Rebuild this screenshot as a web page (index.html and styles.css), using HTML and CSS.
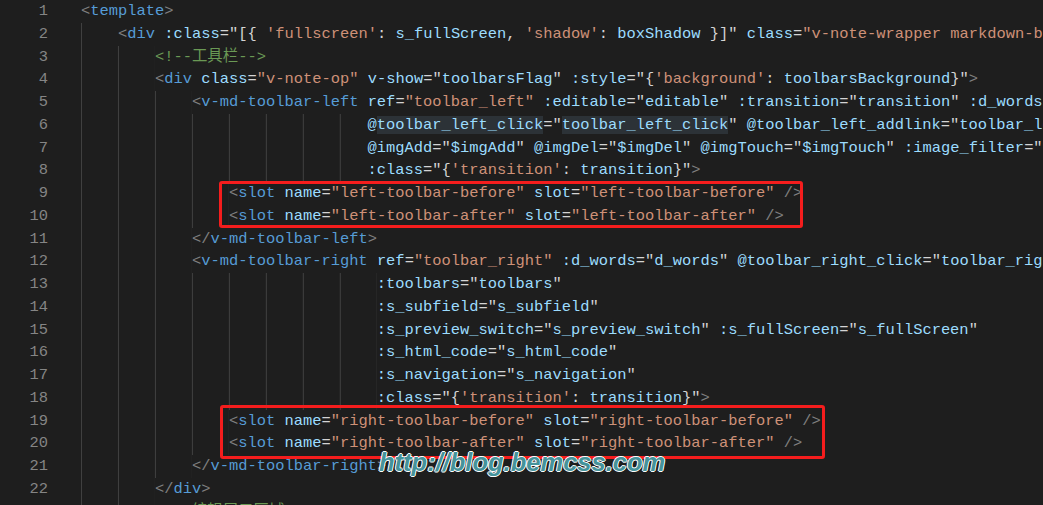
FILE: index.html
```html
<!DOCTYPE html>
<html lang="en">
<head>
    <meta charset="UTF-8">
    <title>v-note editor template</title>
    <link rel="stylesheet" href="styles.css">
</head>
<body>

   <div class="editor">
     <div class="ln"><span class="num">1</span><span class="code"><span class="t">&lt;</span><span class="n">template</span><span class="t">&gt;</span></span></div>
     <div class="ln"><span class="num">2</span><span class="code"><span class="ind">    </span><span class="t">&lt;</span><span class="n">div</span> <span class="a">:class</span>="[{ <span class="s">'fullscreen'</span>: <span class="v">s_fullScreen</span>, <span class="s">'shadow'</span>: <span class="v">boxShadow</span> }]" <span class="a">class</span>=<span class="s">"v-note-wrapper markdown-body"</span></span></div>
     <div class="ln"><span class="num">3</span><span class="code"><span class="ind">        </span><span class="c">&lt;!--工具栏--&gt;</span></span></div>
     <div class="ln"><span class="num">4</span><span class="code"><span class="ind">        </span><span class="t">&lt;</span><span class="n">div</span> <span class="a">class</span>=<span class="s">"v-note-op"</span> <span class="a">v-show</span>="<span class="v">toolbarsFlag</span>" <span class="a">:style</span>="{<span class="s">'background'</span>: <span class="v">toolbarsBackground</span>}"<span class="t">&gt;</span></span></div>
     <div class="ln"><span class="num">5</span><span class="code"><span class="ind">            </span><span class="t">&lt;</span><span class="n">v-md-toolbar-left</span> <span class="a">ref</span>=<span class="s">"toolbar_left"</span> <span class="a">:editable</span>="<span class="v">editable</span>" <span class="a">:transition</span>="<span class="v">transition</span>" <span class="a">:d_words</span>="<span class="v">d_words</span>"</span></div>
     <div class="ln"><span class="num">6</span><span class="code"><span class="ind">                               </span><span class="a">@<span class="hl">toolbar_left_click</span></span>="<span class="v hl">toolbar_left_click</span>" <span class="a">@toolbar_left_addlink</span>="<span class="v">toolbar_left_addlink</span>"</span></div>
     <div class="ln"><span class="num">7</span><span class="code"><span class="ind">                               </span><span class="a">@imgAdd</span>="<span class="v">$imgAdd</span>" <span class="a">@imgDel</span>="<span class="v">$imgDel</span>" <span class="a">@imgTouch</span>="<span class="v">$imgTouch</span>" <span class="a">:image_filter</span>="<span class="v">image_filter</span>"</span></div>
     <div class="ln"><span class="num">8</span><span class="code"><span class="ind">                               </span><span class="a">:class</span>="{<span class="s">'transition'</span>: <span class="v">transition</span>}"<span class="t">&gt;</span></span></div>
     <div class="ln"><span class="num">9</span><span class="code"><span class="ind">                </span><span class="t">&lt;</span><span class="n">slot</span> <span class="a">name</span>=<span class="s">"left-toolbar-before"</span> <span class="a">slot</span>=<span class="s">"left-toolbar-before"</span> <span class="t">/&gt;</span></span></div>
     <div class="ln"><span class="num">10</span><span class="code"><span class="ind">                </span><span class="t">&lt;</span><span class="n">slot</span> <span class="a">name</span>=<span class="s">"left-toolbar-after"</span> <span class="a">slot</span>=<span class="s">"left-toolbar-after"</span> <span class="t">/&gt;</span></span></div>
     <div class="ln"><span class="num">11</span><span class="code"><span class="ind">            </span><span class="t">&lt;/</span><span class="n">v-md-toolbar-left</span><span class="t">&gt;</span></span></div>
     <div class="ln"><span class="num">12</span><span class="code"><span class="ind">            </span><span class="t">&lt;</span><span class="n">v-md-toolbar-right</span> <span class="a">ref</span>=<span class="s">"toolbar_right"</span> <span class="a">:d_words</span>="<span class="v">d_words</span>" <span class="a">@toolbar_right_click</span>="<span class="v">toolbar_right_click</span>"</span></div>
     <div class="ln"><span class="num">13</span><span class="code"><span class="ind">                                </span><span class="a">:toolbars</span>="<span class="v">toolbars</span>"</span></div>
     <div class="ln"><span class="num">14</span><span class="code"><span class="ind">                                </span><span class="a">:s_subfield</span>="<span class="v">s_subfield</span>"</span></div>
     <div class="ln"><span class="num">15</span><span class="code"><span class="ind">                                </span><span class="a">:s_preview_switch</span>="<span class="v">s_preview_switch</span>" <span class="a">:s_fullScreen</span>="<span class="v">s_fullScreen</span>"</span></div>
     <div class="ln"><span class="num">16</span><span class="code"><span class="ind">                                </span><span class="a">:s_html_code</span>="<span class="v">s_html_code</span>"</span></div>
     <div class="ln"><span class="num">17</span><span class="code"><span class="ind">                                </span><span class="a">:s_navigation</span>="<span class="v">s_navigation</span>"</span></div>
     <div class="ln"><span class="num">18</span><span class="code"><span class="ind">                                </span><span class="a">:class</span>="{<span class="s">'transition'</span>: <span class="v">transition</span>}"<span class="t">&gt;</span></span></div>
     <div class="ln"><span class="num">19</span><span class="code"><span class="ind">                </span><span class="t">&lt;</span><span class="n">slot</span> <span class="a">name</span>=<span class="s">"right-toolbar-before"</span> <span class="a">slot</span>=<span class="s">"right-toolbar-before"</span> <span class="t">/&gt;</span></span></div>
     <div class="ln"><span class="num">20</span><span class="code"><span class="ind">                </span><span class="t">&lt;</span><span class="n">slot</span> <span class="a">name</span>=<span class="s">"right-toolbar-after"</span> <span class="a">slot</span>=<span class="s">"right-toolbar-after"</span> <span class="t">/&gt;</span></span></div>
     <div class="ln"><span class="num">21</span><span class="code"><span class="ind">            </span><span class="t">&lt;/</span><span class="n">v-md-toolbar-right</span><span class="t">&gt;</span></span></div>
     <div class="ln"><span class="num">22</span><span class="code"><span class="ind">        </span><span class="t">&lt;/</span><span class="n">div</span><span class="t">&gt;</span></span></div>
     <div class="ln"><span class="num">23</span><span class="code"><span class="ind">        </span><span class="c">&lt;!--编辑展示区域--&gt;</span></span></div>

     <!-- annotations drawn over the code -->
     <div class="mark mark-left"></div>
     <div class="mark mark-right"></div>
     <div class="watermark">http://blog.bemcss.com</div>
   </div>

</body>
</html>
```

FILE: styles.css
```css
    /* page + editor surface */
    html, body {
        margin: 0;
        height: 100%;
        background: #1e1e1e;
        overflow: hidden;
    }
    .editor {
        position: relative;
        height: 505px;
        overflow: hidden;
        font-family: "Liberation Mono", "DejaVu Sans Mono", "Noto Sans CJK SC", monospace;
        font-size: 15.42px;
        line-height: 22.76px;
        color: #d4d4d4;
    }

    /* one row = gutter number + code */
    .ln {
        display: grid;
        grid-template-columns: 48px 1fr;
        column-gap: 33px;
        height: 22.76px;
    }
    .num {
        text-align: right;
        color: #858585;
    }
    .code {
        white-space: pre;
        overflow: hidden;
    }

    /* indent guides, one every 4 columns */
    .ind {
        display: inline-block;
        background-image: linear-gradient(to right, #404040 0, #404040 1px, transparent 1px);
        background-size: 4ch 100%;
        background-repeat: repeat-x;
    }

    /* syntax colours (dark+) */
    .t { color: #808080; }
    .n { color: #569cd6; }
    .a { color: #9cdcfe; }
    .s { color: #ce9178; }
    .v { color: #9cdcfe; }
    .c { color: #6a9955; }
    .hl { background: #2c3237; }

    /* red boxes someone drew on the screenshot */
    .mark {
        position: absolute;
        border: 3px solid #f51d1d;
        border-radius: 3px;
        box-sizing: border-box;
    }
    .mark-left {
        left: 219px;
        top: 181px;
        width: 584px;
        height: 47px;
    }
    .mark-right {
        left: 220px;
        top: 405px;
        width: 605px;
        height: 54px;
    }

    .watermark {
        position: absolute;
        left: 379px;
        top: 450px;
        font-family: "Liberation Sans", Arial, sans-serif;
        font-weight: bold;
        font-style: italic;
        font-size: 25.5px;
        line-height: 1;
        color: #45939b;
        text-shadow: 1px 0 0 #fff, -1px 0 0 #fff, 0 1px 0 #fff, 0 -1px 0 #fff;
    }
```
